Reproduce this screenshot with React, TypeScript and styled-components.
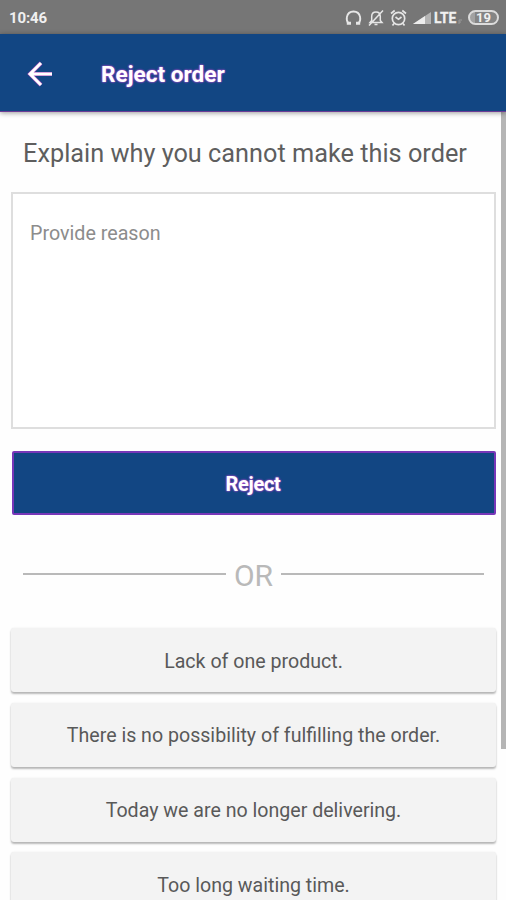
import React from "react";
import styled, { createGlobalStyle } from "styled-components";

const GlobalStyle = createGlobalStyle`
  * { box-sizing: border-box; }
  body {
    margin: 0;
    background: #fefefe;
    font-family: Roboto, "Liberation Sans", sans-serif;
    overflow: hidden;
  }
`;

const Screen = styled.div`
  position: relative;
  display: flex;
  flex-direction: column;
  width: 506px;
  height: 900px;
  overflow: hidden;
  background: #fefefe;
`;

const StatusBar = styled.header`
  display: flex;
  flex: none;
  justify-content: space-between;
  align-items: center;
  height: 34px;
  padding: 1px 7px 0 9px;
  background: #767676;
  color: #f0f0f0;
`;

const Clock = styled.span`
  font-size: 15px;
  font-weight: 700;
  letter-spacing: -0.15px;
`;

const StatusIcons = styled.div`
  display: flex;
  align-items: center;
  height: 18px;
  svg { display: block; flex: none; }
`;

const IconGroup = styled.div`
  display: flex;
  align-items: center;
  gap: 6px;
`;

const Network = styled.span`
  width: 24px;
  margin-left: 3px;
  font-size: 13.8px;
  font-weight: 700;
  line-height: 18px;
  -webkit-text-stroke: 0.3px #f0f0f0;
`;

const Battery = styled.span`
  display: flex;
  align-items: center;
  justify-content: center;
  width: 31px;
  height: 15px;
  margin-left: 5px;
  border: 2px solid #dcdcdc;
  border-radius: 8px;
  background: linear-gradient(90deg, #a2a2a2 20%, #858585 20%);
  font-size: 13px;
  font-weight: 700;
  line-height: 11px;
`;

const AppBar = styled.div`
  display: flex;
  flex: none;
  align-items: center;
  height: 78px;
  padding: 3px 0 0 27px;
  background: #124683;
  border-bottom: 1px solid #6c3c96;
  box-shadow: 0 1px 5px rgba(0, 0, 0, 0.4);
  z-index: 1;
`;

const BackButton = styled.button`
  width: 26px;
  height: 26px;
  padding: 0;
  border: 0;
  background: none;
  svg { display: block; }
`;

const Title = styled.h1`
  margin: 2px 0 0 48px;
  color: #fff;
  font-size: 22.6px;
  font-weight: 700;
  line-height: 28px;
  white-space: nowrap;
  text-shadow: 0 0 2px #b24bd0, 0 0 2px #b24bd0;
`;

const Content = styled.main`
  display: flex;
  flex: 1;
  flex-direction: column;
  min-height: 0;
  padding: 26px 10px 0 11px;
`;

const Prompt = styled.h2`
  margin: 0 0 0 12px;
  color: #5e5e5e;
  font-size: 25.3px;
  font-weight: 400;
  line-height: 32px;
  white-space: nowrap;
`;

const Reason = styled.textarea`
  display: block;
  flex: none;
  width: 485px;
  height: 237px;
  margin-top: 22px;
  padding: 28px 17px;
  resize: none;
  outline: 0;
  border: 2px solid #dedede;
  background: #fff;
  font-family: inherit;
  font-size: 19.7px;
  line-height: 24px;
  &::placeholder { color: #8c8c8c; opacity: 1; }
`;

const RejectButton = styled.button`
  flex: none;
  width: 484px;
  height: 64px;
  margin: 22px 0 0 1px;
  padding: 2px 2px 0 0;
  border: 2px solid #7737b8;
  border-radius: 2px;
  background: #124683;
  color: #fff;
  font-family: inherit;
  font-size: 20px;
  font-weight: 700;
  letter-spacing: -0.3px;
  text-shadow: 0 0 2px #b24bd0, 0 0 2px #b24bd0;
`;

const Divider = styled.div`
  display: flex;
  flex: none;
  align-items: center;
  height: 36px;
  margin: 42px 12px 0;
  color: #b9b9b9;
  font-size: 30px;
  &::before, &::after {
    content: "";
    flex: 1;
    height: 2px;
    margin-bottom: 2px;
    background: #b9b9b9;
  }
`;

const DividerLabel = styled.span`
  width: 55px;
  text-align: center;
`;

const ReasonList = styled.div`
  display: grid;
  flex: none;
  grid-auto-rows: 64px;
  gap: 10.7px;
  margin-top: 35.3px;
`;

const ReasonButton = styled.button`
  padding: 2px 0 0;
  border: 0;
  border-radius: 3px;
  background: #f3f3f3;
  box-shadow: 0 2px 2px rgba(0, 0, 0, 0.27), 0 0 2px rgba(0, 0, 0, 0.08);
  color: #595959;
  font-family: inherit;
  font-size: 19.6px;
  white-space: nowrap;
`;

const Scrollbar = styled.div`
  position: absolute;
  top: 112px;
  right: 0;
  width: 5px;
  height: 637px;
  background: #b5b5b5;
`;

const reasons = [
  "Lack of one product.",
  "There is no possibility of fulfilling the order.",
  "Today we are no longer delivering.",
  "Too long waiting time.",
];

export default function App() {
  return (
    <Screen>
      <GlobalStyle />
      <StatusBar>
        <Clock>10:46</Clock>
        <StatusIcons>
          <IconGroup>
            <svg width="17" height="18" viewBox="0 0 17 18" fill="none" stroke="#e6e6e6">
              <path d="M3.500 14.500C1.800 12.500 1.500 10 1.900 8 2.600 4.600 5 2.500 8.500 2.500s5.900 2.100 6.600 5.500c.4 2 .1 4.500-1.600 6.500" strokeWidth="1.800" />
              <path d="M1.800 14.200h4.200M11 14.200h4.200" strokeWidth="3" />
            </svg>
            <svg width="16" height="18" viewBox="0 0 16 18" fill="none" stroke="#e6e6e6" strokeWidth="1.500">
              <path d="M2 13.500h12l-1.700-2V7.500C12.300 4.800 10.700 3 8 3S3.700 4.800 3.700 7.500v4zM6.500 15.500h3M1 16.500L15 1.500" />
            </svg>
            <svg width="17" height="18" viewBox="0.5 0 17 18" fill="none" stroke="#e6e6e6" strokeWidth="1.700">
              <circle cx="9" cy="9.500" r="6.200" />
              <path d="M1.500 4.500l3.700-3M16.500 4.500l-3.700-3M6 8l3 2.300L12 8M4.500 14.500L3 16.500M13.500 14.500l1.500 2" />
            </svg>
            <svg width="18" height="18" viewBox="0 0 18 18">
              <path d="M0 15L18 3v12z" fill="#b4b4b4" />
              <path d="M0 15L12 7v8z" fill="#ededed" />
            </svg>
          </IconGroup>
          <Network>LTE</Network>
          <svg width="5" height="18" viewBox="0 0 5 18" fill="none" stroke="#999">
            <path d="M1 15v-4h3M1 13h2" />
          </svg>
          <Battery>19</Battery>
        </StatusIcons>
      </StatusBar>
      <AppBar>
        <BackButton aria-label="Back">
          <svg width="26" height="26" viewBox="0 0 26 26" fill="none">
            <path d="M25 13H3M14 2L3 13l11 11" stroke="#a849b8" strokeWidth="4" />
            <path d="M25 13H3M14 2L3 13l11 11" stroke="#fff" strokeWidth="3" />
          </svg>
        </BackButton>
        <Title>Reject order</Title>
      </AppBar>
      <Content>
        <Prompt>Explain why you cannot make this order</Prompt>
        <Reason placeholder="Provide reason" />
        <RejectButton>Reject</RejectButton>
        <Divider><DividerLabel>OR</DividerLabel></Divider>
        <ReasonList>
          {reasons.map((reason) => (
            <ReasonButton key={reason}>{reason}</ReasonButton>
          ))}
        </ReasonList>
      </Content>
      <Scrollbar />
    </Screen>
  );
}
